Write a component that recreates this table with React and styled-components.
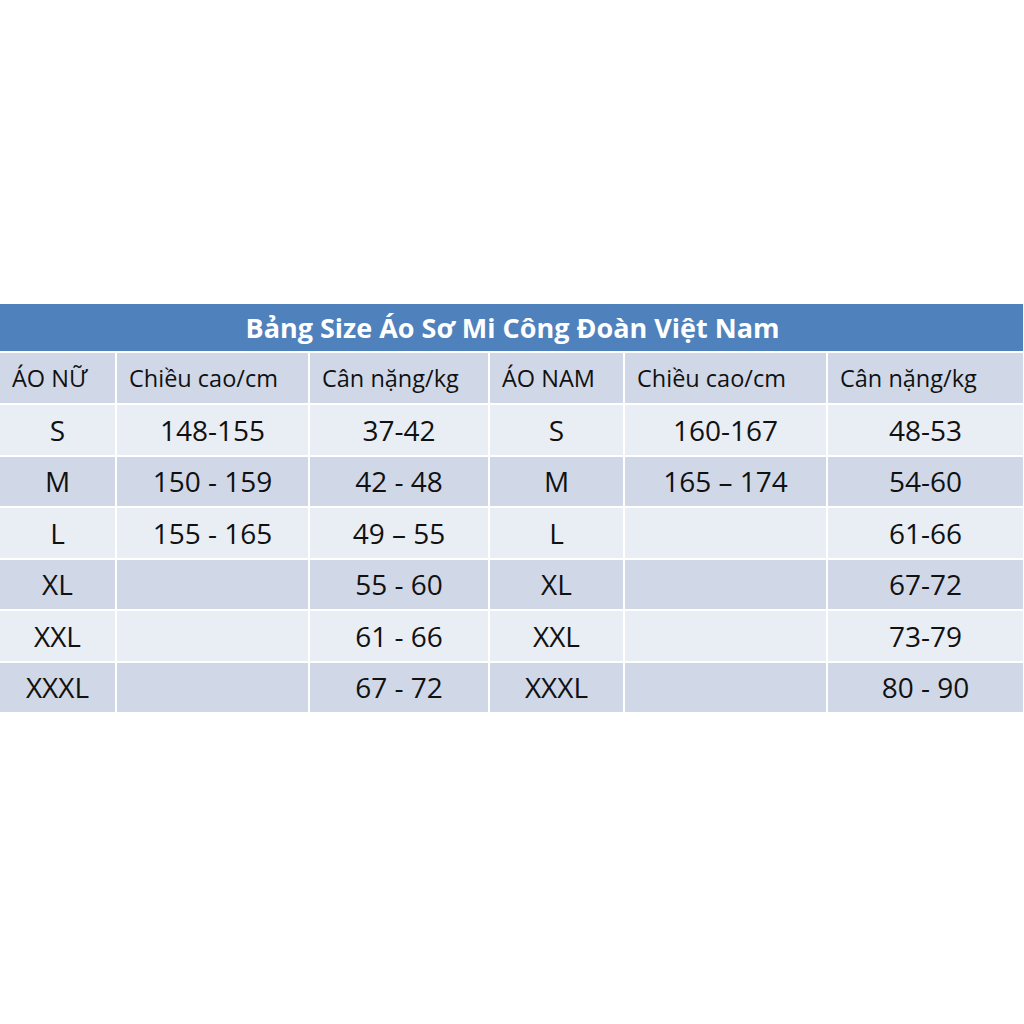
import React from 'react';
import styled, { createGlobalStyle } from 'styled-components';

const GlobalStyle = createGlobalStyle`
 html, body {
  margin: 0;
  padding: 0;
  background: #ffffff;
 }
 body {
  font-family: 'Open Sans', 'Noto Sans', sans-serif;
 }
`;

const columns = ['ÁO NỮ', 'Chiều cao/cm', 'Cân nặng/kg', 'ÁO NAM', 'Chiều cao/cm', 'Cân nặng/kg'];

const rows = [
 ['S', '148-155', '37-42', 'S', '160-167', '48-53'],
 ['M', '150 - 159', '42 - 48', 'M', '165 – 174', '54-60'],
 ['L', '155 - 165', '49 – 55', 'L', '', '61-66'],
 ['XL', '', '55 - 60', 'XL', '', '67-72'],
 ['XXL', '', '61 - 66', 'XXL', '', '73-79'],
 ['XXXL', '', '67 - 72', 'XXXL', '', '80 - 90'],
];

function App() {
 return (
  <>
   <GlobalStyle />
   <Page>
    <Table>
     <Title>Bảng Size Áo Sơ Mi Công Đoàn Việt Nam</Title>
     {columns.map((c, i) => (
      <HeadCell key={'h' + i}>{c}</HeadCell>
     ))}
     {rows.map((row, r) =>
      row.map((cell, i) => (
       <Cell key={r + '-' + i} $light={r % 2 === 0}>
        {cell}
       </Cell>
      ))
     )}
    </Table>
   </Page>
  </>
 );
}

const Page = styled.div`
 width: 1024px;
 height: 1024px;
 padding-top: 304px;
 box-sizing: border-box;
`;

const Table = styled.div`
 display: grid;
 width: 1023px;
 grid-template-columns: 115px 191px 178px 133px 201px 195px;
 grid-template-rows: 47px 50px repeat(6, 49.5px);
 gap: 2px;
 background: #ffffff;
`;

const Title = styled.div`
 grid-column: 1 / -1;
 background: #4f81bd;
 color: #ffffff;
 font-weight: 700;
 font-size: 27px;
 display: flex;
 align-items: center;
 justify-content: center;
 padding-left: 2px;
`;

const HeadCell = styled.div`
 background: #d0d8e8;
 color: #111111;
 font-size: 23.5px;
 display: flex;
 align-items: center;
 padding-left: 12px;
 white-space: nowrap;
`;

const Cell = styled.div`
 background: ${(p) => (p.$light ? '#e9edf4' : '#d0d8e8')};
 color: #111111;
 font-size: 28px;
 display: flex;
 align-items: center;
 justify-content: center;
 white-space: nowrap;
`;

export default App;
